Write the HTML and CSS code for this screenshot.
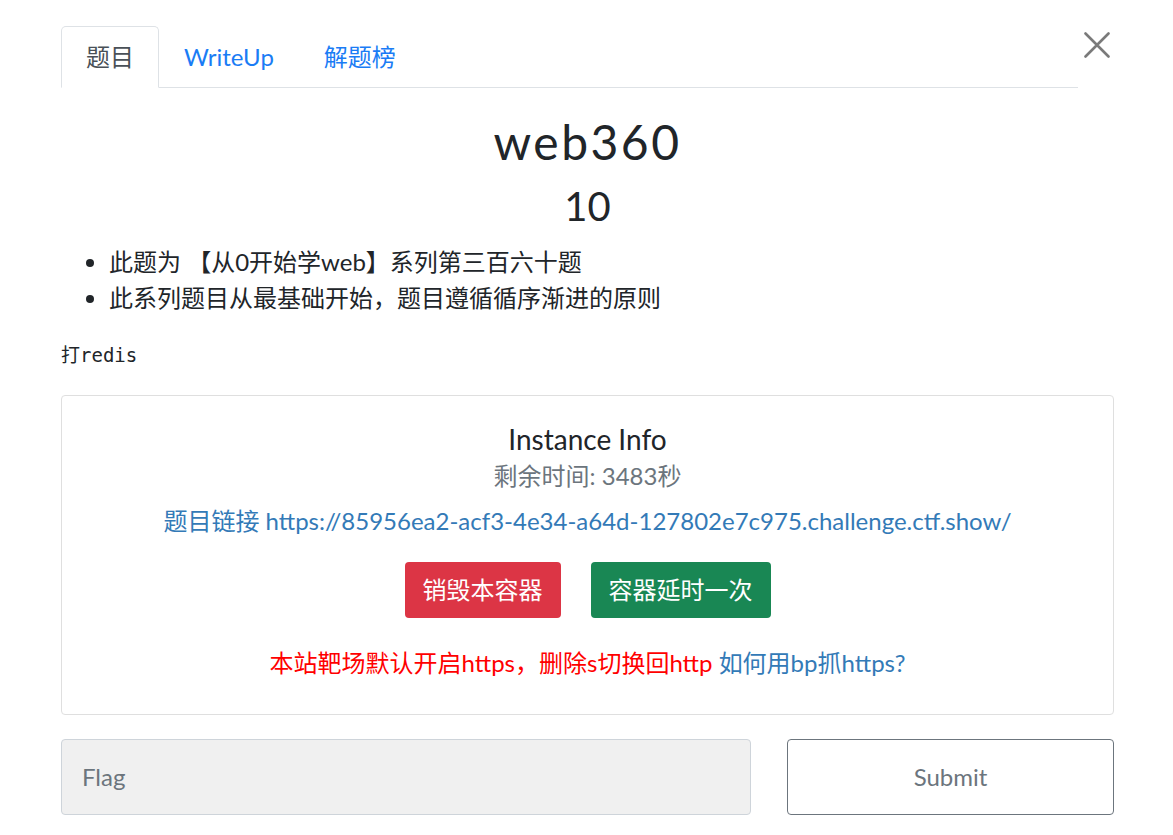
FILE: index.html
```html
<!DOCTYPE html>
<html lang="zh">
<head>
<meta charset="utf-8">
<link rel="stylesheet" href="styles.css">
</head>
<body>
<div class="modal-body">
  <div class="top-row">
    <ul class="nav-tabs">
      <li class="tab active">题目</li>
      <li class="tab">WriteUp</li>
      <li class="tab">解题榜</li>
    </ul>
    <div class="close">
      <svg width="26" height="26" viewBox="0 0 26 26"><path d="M1.5 1.5 L24.5 24.5 M24.5 1.5 L1.5 24.5" stroke="#7a7a7a" stroke-width="2.6" stroke-linecap="round"/></svg>
    </div>
  </div>
  <h2 class="chal-name">web360</h2>
  <h3 class="chal-value">10</h3>
  <ul class="desc">
    <li>此题为 【从0开始学web】系列第三百六十题</li>
    <li>此系列题目从最基础开始，题目遵循循序渐进的原则</li>
  </ul>
  <p class="hint">打<code>redis</code></p>
  <div class="card">
    <div class="card-title">Instance Info</div>
    <div class="remain">剩余时间: 3483秒</div>
    <div class="link">题目链接 https://85956ea2-acf3-4e34-a64d-127802e7c975.challenge.ctf.show/</div>
    <div class="btns">
      <span class="btn red">销毁本容器</span>
      <span class="btn green">容器延时一次</span>
    </div>
    <div class="notice"><span class="warn">本站靶场默认开启https，删除s切换回http</span> <span class="how">如何用bp抓https?</span></div>
  </div>
  <div class="submit-row">
    <div class="flag">Flag</div>
    <div class="submit">Submit</div>
  </div>
</div>
</body>
</html>
```
FILE: styles.css
```css
html, body {
  margin: 0;
  padding: 0;
  background: #fff;
}
body {
  font-family: Lato, "Noto Sans CJK SC", sans-serif;
  color: #212529;
  width: 1173px;
  height: 835px;
  overflow: hidden;
}
.modal-body {
  padding: 26px 59px 0 61px;
}
.top-row {
  display: flex;
  align-items: flex-start;
}
.nav-tabs {
  flex: 1;
  display: flex;
  list-style: none;
  margin: 0;
  padding: 0;
  border-bottom: 1px solid #dee2e6;
}
.tab {
  font-size: 24px;
  line-height: 36px;
  padding: 12px 24px;
  border: 1px solid transparent;
  border-top-left-radius: 5px;
  border-top-right-radius: 5px;
  margin-bottom: -1px;
  color: #1a7cf5;
}
.tab.active {
  color: #495057;
  border-color: #dee2e6 #dee2e6 #fff;
  background: #fff;
}
.close {
  width: 26px;
  height: 26px;
  margin: 6px 4px 0 6px;
}
.chal-name {
  text-align: center;
  font-size: 48px;
  font-weight: 400;
  letter-spacing: 2.5px;
  line-height: 58px;
  margin: 25px 0 0;
}
.chal-value {
  text-align: center;
  font-size: 40px;
  font-weight: 400;
  line-height: 48px;
  margin: 11px 0 0;
}
.desc {
  margin: 14px 0 0;
  padding-left: 48px;
  font-size: 24px;
  line-height: 36px;
}
.hint {
  margin: 25px 0 0;
  font-size: 19px;
  line-height: 26px;
  font-family: "Noto Sans CJK SC", sans-serif;
  color: #212529;
}
.hint code {
  font-family: "DejaVu Sans Mono", monospace;
  font-size: 19px;
}
.card {
  margin-top: 27px;
  border: 1px solid #dfdfdf;
  border-radius: 4px;
  padding: 26px 20px 33px;
  text-align: center;
}
.card-title {
  font-size: 28px;
  line-height: 34px;
}
.remain {
  margin-top: 2px;
  font-size: 24px;
  line-height: 36px;
  color: #6c757d;
}
.link {
  margin-top: 9px;
  font-size: 24px;
  line-height: 36px;
  color: #337ab7;
}
.btns {
  margin-top: 23px;
  display: flex;
  justify-content: center;
  gap: 30px;
}
.btn {
  display: inline-block;
  font-size: 24px;
  line-height: 36px;
  padding: 10px 18px;
  border-radius: 4px;
  color: #fff;
}
.btn.red { background: #dc3545; }
.btn.green { background: #198754; }
.notice {
  margin-top: 27px;
  font-size: 24px;
  line-height: 36px;
}
.warn { color: #ff0000; }
.how { color: #337ab7; }
.submit-row {
  margin-top: 24px;
  display: flex;
  gap: 36px;
}
.flag {
  flex: 0 0 690px;
  box-sizing: border-box;
  height: 76px;
  background: #f0f0f0;
  border: 1px solid #ced4da;
  border-radius: 4px;
  font-size: 24px;
  line-height: 74px;
  padding-left: 20px;
  color: #6c757d;
}
.submit {
  flex: 1;
  box-sizing: border-box;
  height: 76px;
  border: 1px solid #6c757d;
  border-radius: 4px;
  font-size: 24px;
  line-height: 74px;
  text-align: center;
  color: #6c757d;
}
```
